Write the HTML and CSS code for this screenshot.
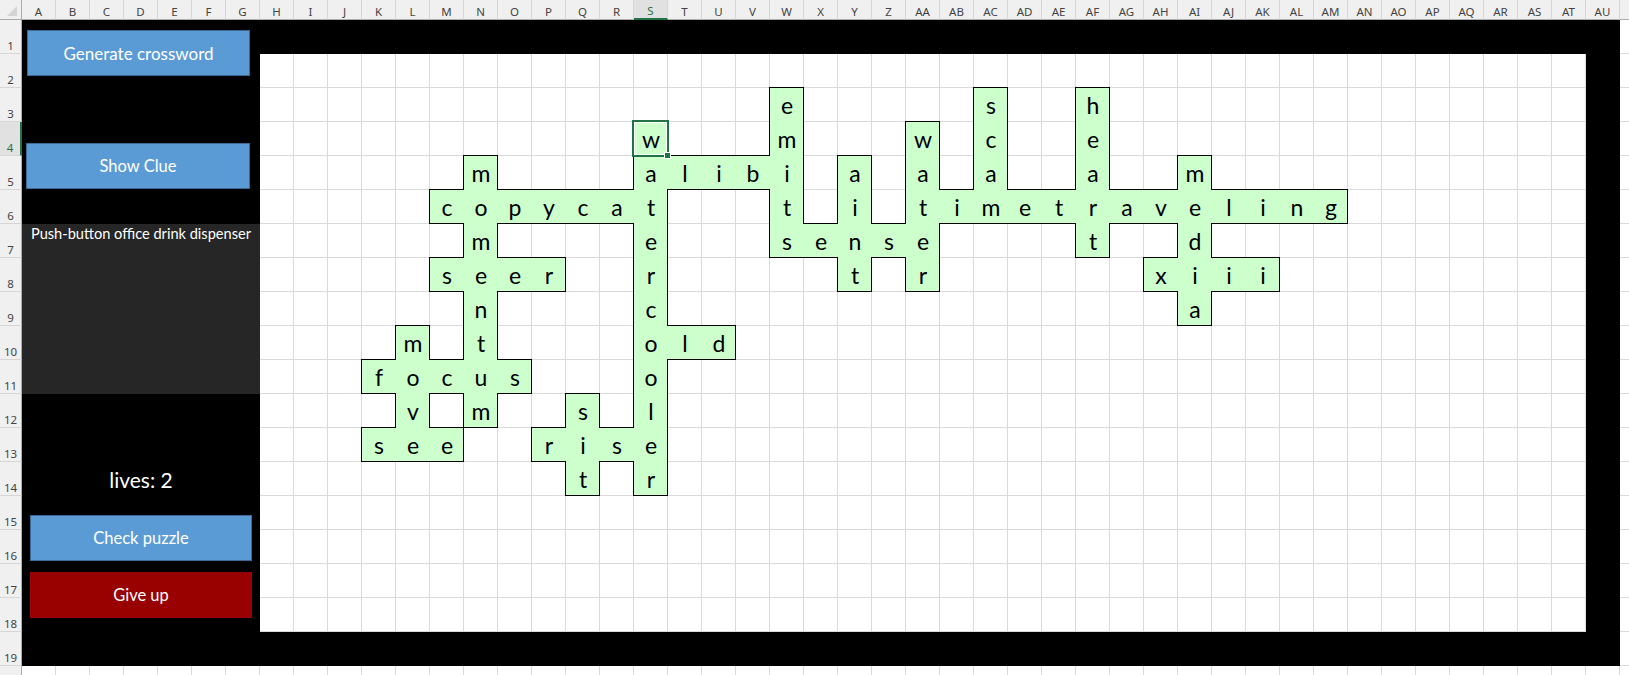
FILE: index.html
```html
<!DOCTYPE html>
<html>
<head>
<meta charset="utf-8">
<link rel="stylesheet" href="styles.css">
</head>
<body>
<div class="app">
  <div class="corner"><svg width="21" height="19" viewBox="0 0 21 19"><polygon points="17,6 17,16 7,16" fill="#d4d4d4"/></svg></div>
  <div class="colhead">
    <div class="ch">A</div><div class="ch">B</div><div class="ch">C</div><div class="ch">D</div><div class="ch">E</div><div class="ch">F</div><div class="ch">G</div><div class="ch">H</div><div class="ch">I</div><div class="ch">J</div><div class="ch">K</div><div class="ch">L</div><div class="ch">M</div><div class="ch">N</div><div class="ch">O</div><div class="ch">P</div><div class="ch">Q</div><div class="ch">R</div><div class="ch sel">S</div><div class="ch">T</div><div class="ch">U</div><div class="ch">V</div><div class="ch">W</div><div class="ch">X</div><div class="ch">Y</div><div class="ch">Z</div><div class="ch">AA</div><div class="ch">AB</div><div class="ch">AC</div><div class="ch">AD</div><div class="ch">AE</div><div class="ch">AF</div><div class="ch">AG</div><div class="ch">AH</div><div class="ch">AI</div><div class="ch">AJ</div><div class="ch">AK</div><div class="ch">AL</div><div class="ch">AM</div><div class="ch">AN</div><div class="ch">AO</div><div class="ch">AP</div><div class="ch">AQ</div><div class="ch">AR</div><div class="ch">AS</div><div class="ch">AT</div><div class="ch">AU</div><div class="ch"></div>
  </div>
  <div class="rowhead">
    <div class="rh">1</div><div class="rh">2</div><div class="rh">3</div><div class="rh sel">4</div><div class="rh">5</div><div class="rh">6</div><div class="rh">7</div><div class="rh">8</div><div class="rh">9</div><div class="rh">10</div><div class="rh">11</div><div class="rh">12</div><div class="rh">13</div><div class="rh">14</div><div class="rh">15</div><div class="rh">16</div><div class="rh">17</div><div class="rh">18</div><div class="rh">19</div><div class="rh"></div>
  </div>
  <div class="main">
    <div class="sheet">
      <div class="panel">
        <div class="btn blue gen">Generate crossword</div>
        <div class="btn blue show">Show Clue</div>
        <div class="clue">Push-button office drink dispenser</div>
        <div class="lives">lives: 2</div>
        <div class="btn blue check">Check puzzle</div>
        <div class="btn red give">Give up</div>
      </div>
      <div class="board"></div>

      <div class="c t l r" style="grid-area:3/23">e</div>
      <div class="c t l r" style="grid-area:3/29">s</div>
      <div class="c t l r" style="grid-area:3/32">h</div>

      <div class="c t l r cur" style="grid-area:4/19">w<span class="handle"></span></div>
      <div class="c l r" style="grid-area:4/23">m</div>
      <div class="c t l r" style="grid-area:4/27">w</div>
      <div class="c l r" style="grid-area:4/29">c</div>
      <div class="c l r" style="grid-area:4/32">e</div>

      <div class="c t l r" style="grid-area:5/14">m</div>
      <div class="c l" style="grid-area:5/19">a</div>
      <div class="c t b" style="grid-area:5/20">l</div>
      <div class="c t b" style="grid-area:5/21">i</div>
      <div class="c t b" style="grid-area:5/22">b</div>
      <div class="c r" style="grid-area:5/23">i</div>
      <div class="c t l r" style="grid-area:5/25">a</div>
      <div class="c l r" style="grid-area:5/27">a</div>
      <div class="c l r" style="grid-area:5/29">a</div>
      <div class="c l r" style="grid-area:5/32">a</div>
      <div class="c t l r" style="grid-area:5/35">m</div>

      <div class="c t b l" style="grid-area:6/13">c</div>
      <div class="c" style="grid-area:6/14">o</div>
      <div class="c t b" style="grid-area:6/15">p</div>
      <div class="c t b" style="grid-area:6/16">y</div>
      <div class="c t b" style="grid-area:6/17">c</div>
      <div class="c t b" style="grid-area:6/18">a</div>
      <div class="c r" style="grid-area:6/19">t</div>
      <div class="c l r" style="grid-area:6/23">t</div>
      <div class="c l r" style="grid-area:6/25">i</div>
      <div class="c l" style="grid-area:6/27">t</div>
      <div class="c t b" style="grid-area:6/28">i</div>
      <div class="c b" style="grid-area:6/29">m</div>
      <div class="c t b" style="grid-area:6/30">e</div>
      <div class="c t b" style="grid-area:6/31">t</div>
      <div class="c" style="grid-area:6/32">r</div>
      <div class="c t b" style="grid-area:6/33">a</div>
      <div class="c t b" style="grid-area:6/34">v</div>
      <div class="c" style="grid-area:6/35">e</div>
      <div class="c t b" style="grid-area:6/36">l</div>
      <div class="c t b" style="grid-area:6/37">i</div>
      <div class="c t b" style="grid-area:6/38">n</div>
      <div class="c t b r" style="grid-area:6/39">g</div>

      <div class="c l r" style="grid-area:7/14">m</div>
      <div class="c l r" style="grid-area:7/19">e</div>
      <div class="c b l" style="grid-area:7/23">s</div>
      <div class="c t b" style="grid-area:7/24">e</div>
      <div class="c" style="grid-area:7/25">n</div>
      <div class="c t b" style="grid-area:7/26">s</div>
      <div class="c r" style="grid-area:7/27">e</div>
      <div class="c b l r" style="grid-area:7/32">t</div>
      <div class="c l r" style="grid-area:7/35">d</div>

      <div class="c t b l" style="grid-area:8/13">s</div>
      <div class="c" style="grid-area:8/14">e</div>
      <div class="c t b" style="grid-area:8/15">e</div>
      <div class="c t b r" style="grid-area:8/16">r</div>
      <div class="c l r" style="grid-area:8/19">r</div>
      <div class="c b l r" style="grid-area:8/25">t</div>
      <div class="c b l r" style="grid-area:8/27">r</div>
      <div class="c t b l" style="grid-area:8/34">x</div>
      <div class="c" style="grid-area:8/35">i</div>
      <div class="c t b" style="grid-area:8/36">i</div>
      <div class="c t b r" style="grid-area:8/37">i</div>

      <div class="c l r" style="grid-area:9/14">n</div>
      <div class="c l r" style="grid-area:9/19">c</div>
      <div class="c b l r" style="grid-area:9/35">a</div>

      <div class="c t l r" style="grid-area:10/12">m</div>
      <div class="c l r" style="grid-area:10/14">t</div>
      <div class="c l" style="grid-area:10/19">o</div>
      <div class="c t b" style="grid-area:10/20">l</div>
      <div class="c t b r" style="grid-area:10/21">d</div>

      <div class="c t b l" style="grid-area:11/11">f</div>
      <div class="c" style="grid-area:11/12">o</div>
      <div class="c t b" style="grid-area:11/13">c</div>
      <div class="c" style="grid-area:11/14">u</div>
      <div class="c t b r" style="grid-area:11/15">s</div>
      <div class="c l r" style="grid-area:11/19">o</div>

      <div class="c l r" style="grid-area:12/12">v</div>
      <div class="c b l r" style="grid-area:12/14">m</div>
      <div class="c t l r" style="grid-area:12/17">s</div>
      <div class="c l r" style="grid-area:12/19">l</div>

      <div class="c t b l" style="grid-area:13/11">s</div>
      <div class="c b" style="grid-area:13/12">e</div>
      <div class="c t b r" style="grid-area:13/13">e</div>
      <div class="c t b l" style="grid-area:13/16">r</div>
      <div class="c" style="grid-area:13/17">i</div>
      <div class="c t b" style="grid-area:13/18">s</div>
      <div class="c r" style="grid-area:13/19">e</div>

      <div class="c b l r" style="grid-area:14/17">t</div>
      <div class="c b l r" style="grid-area:14/19">r</div>
    </div>
  </div>
</div>
</body>
</html>
```
FILE: styles.css
```css
html, body {
  margin: 0;
  padding: 0;
  background: #fff;
}
body {
  width: 1629px;
  height: 675px;
  overflow: hidden;
}
.app {
  display: grid;
  grid-template-columns: 22px 1fr;
  grid-template-rows: 20px 1fr;
  width: 1629px;
  height: 675px;
  overflow: hidden;
}
.corner {
  background: #f0f0f0;
  border-right: 1px solid #ababab;
  border-bottom: 1px solid #ababab;
  box-sizing: border-box;
}
.corner svg { display: block; }
.colhead {
  display: flex;
  overflow: hidden;
  background: #f0f0f0;
}
.ch {
  flex: none;
  width: 34px;
  height: 20px;
  box-sizing: border-box;
  border-right: 1px solid #d6d6d6;
  border-bottom: 1px solid #ababab;
  padding-top: 3px;
  display: flex;
  justify-content: center;
  align-items: center;
  font-family: "Noto Sans", "Open Sans", sans-serif;
  font-size: 11.5px;
  color: #444;
}
.ch.sel {
  background: #e1e1e1;
  color: #217346;
  border-bottom: 2px solid #217346;
}
.rowhead {
  display: flex;
  flex-direction: column;
  overflow: hidden;
  background: #f0f0f0;
}
.rh {
  flex: none;
  height: 34px;
  box-sizing: border-box;
  border-bottom: 1px solid #d6d6d6;
  border-right: 1px solid #ababab;
  display: flex;
  justify-content: center;
  align-items: flex-end;
  font-family: "Noto Sans", "Open Sans", sans-serif;
  font-size: 11.5px;
  color: #444;
}
.rh.sel {
  background: #e1e1e1;
  color: #217346;
  border-right: 2px solid #217346;
}
.main {
  overflow: hidden;
  background-color: #fff;
  background-image:
    linear-gradient(to right, transparent 33px, #dadada 33px),
    linear-gradient(to bottom, transparent 33px, #dadada 33px);
  background-size: 34px 34px;
}
.sheet {
  display: grid;
  grid-template-columns: repeat(47, 34px);
  grid-template-rows: repeat(19, 34px);
  width: 1598px;
  height: 646px;
  background: #000;
}
.panel {
  grid-column: 1 / 8;
  grid-row: 1 / 20;
  display: flex;
  flex-direction: column;
  align-items: flex-start;
}
.btn {
  display: flex;
  align-items: center;
  justify-content: center;
  box-sizing: border-box;
  height: 46px;
  width: 223px;
  font-family: "Lato", "Open Sans", sans-serif;
  font-size: 16.5px;
  color: #fff;
}
.blue {
  background: #5b9bd5;
  border: 1px solid #3b6a96;
}
.red {
  background: #990000;
}
.gen { margin: 10px 0 0 5px; font-size: 17px; }
.show { margin: 67px 0 0 4px; width: 224px; }
.clue {
  margin-top: 35px;
  width: 238px;
  height: 170px;
  box-sizing: border-box;
  padding: 1px 2px 0;
  background: #262626;
  color: #fff;
  text-align: center;
  font-family: "Lato", "Open Sans", sans-serif;
  font-size: 14.6px;
}
.lives {
  margin-top: 68px;
  width: 238px;
  height: 34px;
  display: flex;
  align-items: center;
  justify-content: center;
  color: #fff;
  font-family: "Lato", "Open Sans", sans-serif;
  font-size: 21px;
}
.check { margin: 19px 0 0 8px; width: 222px; }
.give { margin: 11px 0 0 8px; width: 222px; }
.board {
  grid-column: 8 / 47;
  grid-row: 2 / 19;
  background-color: #fff;
  background-image:
    linear-gradient(to right, transparent 33px, #dadada 33px),
    linear-gradient(to bottom, transparent 33px, #dadada 33px);
  background-size: 34px 34px;
}
.c {
  position: relative;
  background: #ccffcc;
  color: #000;
  text-align: center;
  font-family: "Lato", "Open Sans", sans-serif;
  font-size: 23px;
  line-height: 34px;
}
.c::after {
  content: "";
  position: absolute;
  top: -1px;
  left: -1px;
  right: 0;
  bottom: 0;
  z-index: 1;
  pointer-events: none;
}
.c.t::after { border-top: 1px solid #000; }
.c.b::after { border-bottom: 1px solid #000; }
.c.l::after { border-left: 1px solid #000; }
.c.r::after { border-right: 1px solid #000; }
.c.cur::before {
  content: "";
  position: absolute;
  top: -2px;
  left: -2px;
  right: -1px;
  bottom: -1px;
  border: 2px solid #217346;
  box-shadow: inset 0 0 0 1px #fff;
  z-index: 2;
  pointer-events: none;
}
.handle {
  position: absolute;
  right: -3px;
  bottom: -3px;
  width: 5px;
  height: 5px;
  background: #217346;
  border: 1px solid #fff;
  z-index: 3;
}
```
